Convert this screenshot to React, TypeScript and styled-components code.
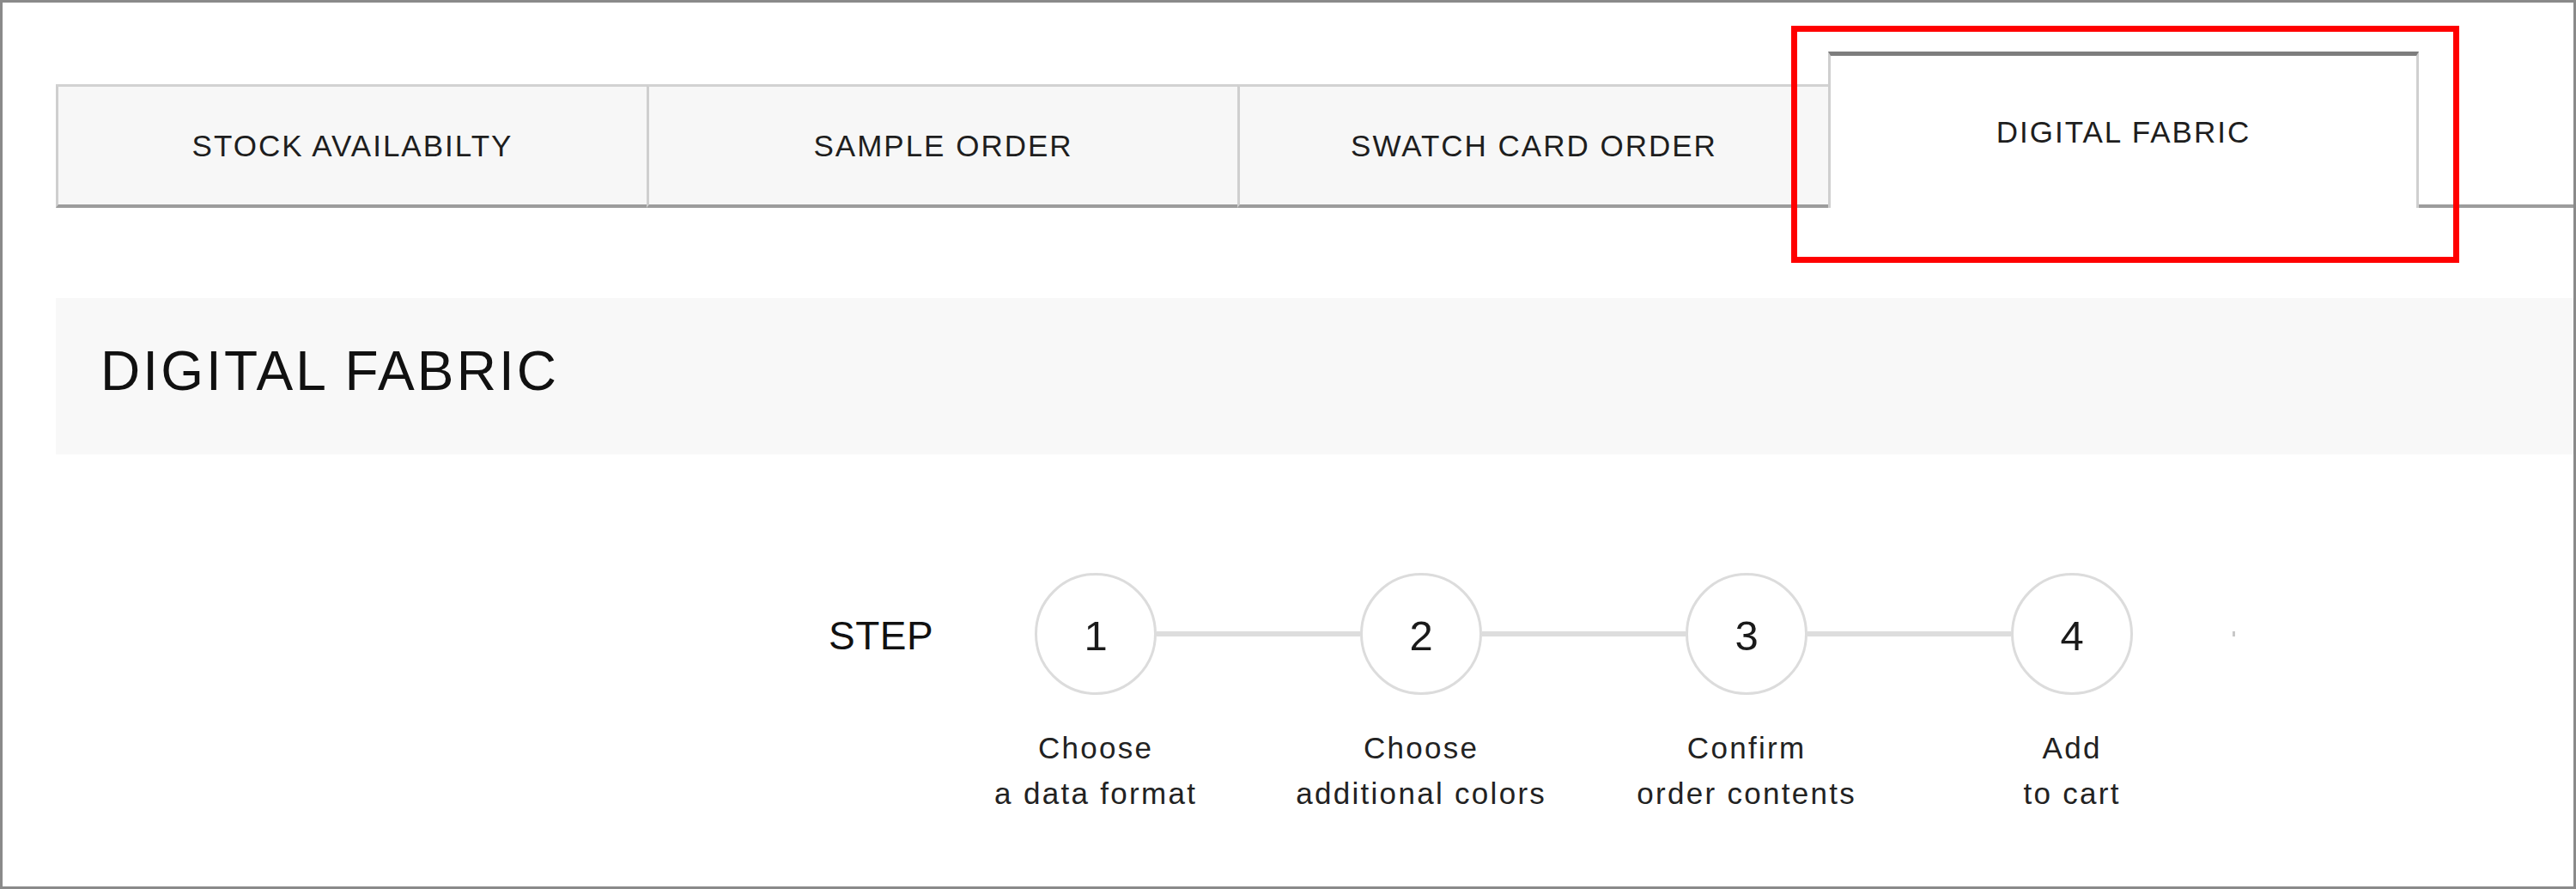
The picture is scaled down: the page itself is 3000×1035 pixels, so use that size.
import React from "react";
import styled, { createGlobalStyle } from "styled-components";

const Global = createGlobalStyle`
  html, body { margin: 0; padding: 0; background: #fff; }
  body { font-family: "Liberation Sans", Arial, sans-serif; color: #222; }
  * { box-sizing: border-box; }
`;

const Frame = styled.div`
  position: relative;
  width: 3000px;
  height: 1035px;
  border: 3px solid #8a8a8a;
  overflow: hidden;
  padding: 57px 0 0 62px;
`;

const TabBar = styled.div`
  display: flex;
  align-items: flex-end;
  height: 182px;
`;

const Tab = styled.div<{ $active?: boolean }>`
  flex: none;
  width: 688px;
  display: flex;
  align-items: center;
  justify-content: center;
  font-size: 35px;
  letter-spacing: 2px;
  color: #1e1e1e;
  border-left: 3px solid #cfcfcf;
  ${(p) =>
    p.$active
      ? `
    height: 182px;
    background: #fff;
    border-top: 5px solid #7d7d7d;
    border-right: 3px solid #cfcfcf;
  `
      : `
    height: 144px;
    background: #f7f7f7;
    border-top: 3px solid #d2d2d2;
    border-bottom: 4px solid #9c9c9c;
  `}
`;

const TabFiller = styled.div`
  flex: 1;
  height: 4px;
  background: #9c9c9c;
`;

const HeaderBand = styled.div`
  margin-top: 105px;
  height: 182px;
  background: #f8f8f8;
  display: flex;
  align-items: center;
  padding: 0 0 12px 52px;
`;

const HeaderTitle = styled.h2`
  margin: 0;
  font-size: 64px;
  font-weight: 400;
  letter-spacing: 3.1px;
  color: #111;
`;

const StepSection = styled.div`
  display: flex;
  align-items: flex-start;
  margin: 138px 0 0 900px;
`;

const StepTitle = styled.div`
  height: 142px;
  display: flex;
  align-items: center;
  font-size: 46px;
  letter-spacing: 0.5px;
  color: #111;
  margin-right: 118px;
  padding-top: 4px;
`;

const Steps = styled.div`
  display: flex;
  align-items: flex-start;
`;

const Step = styled.div`
  width: 142px;
  display: flex;
  flex-direction: column;
  align-items: center;
`;

const Circle = styled.div`
  width: 142px;
  height: 142px;
  border-radius: 50%;
  border: 3px solid #dcdcdc;
  display: flex;
  align-items: center;
  justify-content: center;
  font-size: 49px;
  color: #1a1a1a;
  padding-top: 4px;
`;

const Label = styled.div`
  margin-top: 35px;
  white-space: nowrap;
  text-align: center;
  font-size: 35px;
  line-height: 53px;
  letter-spacing: 2.3px;
  color: #222;
`;

const Connector = styled.div`
  flex: none;
  width: 237px;
  height: 6px;
  margin-top: 68px;
  background: #dddddd;
`;

const Dot = styled.div`
  flex: none;
  width: 3px;
  height: 6px;
  margin: 68px 0 0 116px;
  background: #c8c8c8;
`;

const Annotation = styled.div`
  position: absolute;
  left: 2083px;
  top: 27px;
  width: 778px;
  height: 276px;
  border: 7px solid #ff0000;
  pointer-events: none;
`;

const tabs = ["STOCK AVAILABILTY", "SAMPLE ORDER", "SWATCH CARD ORDER", "DIGITAL FABRIC"];
const steps = [
  ["Choose", "a data format"],
  ["Choose", "additional colors"],
  ["Confirm", "order contents"],
  ["Add", "to cart"],
];

export default function App() {
  return (
    <>
      <Global />
      <Frame>
        <TabBar>
          {tabs.map((t, i) => (
            <Tab key={t} $active={i === 3}>
              {t}
            </Tab>
          ))}
          <TabFiller />
        </TabBar>
        <HeaderBand>
          <HeaderTitle>DIGITAL FABRIC</HeaderTitle>
        </HeaderBand>
        <StepSection>
          <StepTitle>STEP</StepTitle>
          <Steps>
            {steps.map((s, i) => (
              <React.Fragment key={i}>
                {i > 0 && <Connector />}
                <Step>
                  <Circle>{i + 1}</Circle>
                  <Label>
                    {s[0]}
                    <br />
                    {s[1]}
                  </Label>
                </Step>
              </React.Fragment>
            ))}
            <Dot />
          </Steps>
        </StepSection>
        <Annotation />
      </Frame>
    </>
  );
}
